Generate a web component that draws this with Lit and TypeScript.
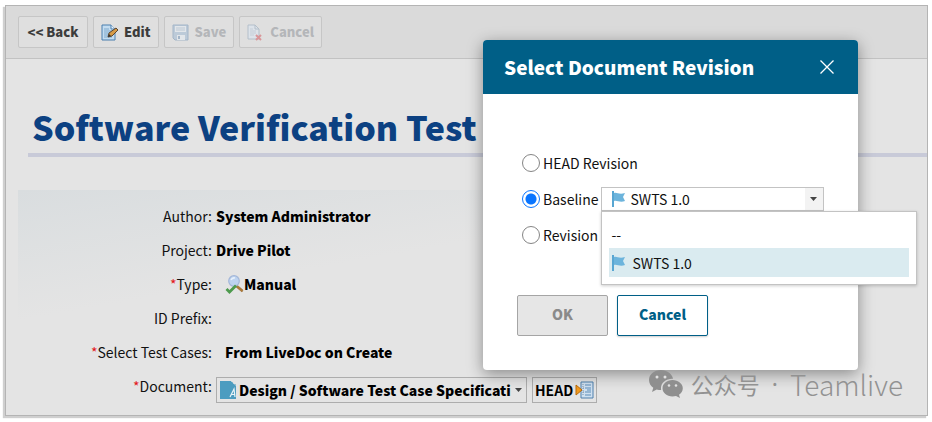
import { LitElement, html, css, svg } from "lit";
import { customElement, state } from "lit/decorators.js";

const pageBlue = svg`<path d="M1 1h9l4 4v11H1z" fill="#c3dcf0" stroke="#4a7fae"/><path d="M10 1v4h4" fill="#eef6fc" stroke="#4a7fae"/><path d="M3 5h5M3 7h8M3 9h8M3 11h8M3 13h8" stroke="#7fa9cc" fill="none"/>`;

const icons = {
  edit: html`<svg width="17" height="17" viewBox="0 0 17 17" aria-hidden="true">${pageBlue}<path d="M7 13l1-4 7-5 2 2-6 6z" fill="#d79a45" stroke="#5a4632" stroke-width="1"/><path d="M7 13l1-3 2 2z" fill="#333"/></svg>`,
  save: html`<svg width="17" height="17" viewBox="0 0 17 17" aria-hidden="true"><path d="M1 1h15v15H3l-2-2z" fill="#bccad8" stroke="#a3b5c8"/><path d="M3 2h11v6H3z" fill="#e2e6ea"/><path d="M4 4h9M4 6h9" stroke="#bcc8d4"/><path d="M5 11h8v5H5z" fill="#e2e6ea"/><path d="M6 12h2v3H6z" fill="#a3b5c8"/></svg>`,
  discard: html`<svg width="17" height="17" viewBox="0 0 17 17" aria-hidden="true"><path d="M1 1h7l4 4v10H1z" fill="#dde3ea" stroke="#b4bfca"/><path d="M8 1v4h4" fill="none" stroke="#b4bfca"/><path d="M3 5h3M3 7h6M3 9h6M3 11h4" stroke="#c5ced8"/><path d="M9 11l5 5M14 11l-5 5" stroke="#d9969a" stroke-width="2"/></svg>`,
  manual: html`<svg width="19" height="19" viewBox="0 0 19 19" aria-hidden="true"><path d="M12 10l6 5-1 2-6-5z" fill="#b07a35" stroke="#8a5c22" stroke-width=".5"/><circle cx="9" cy="6" r="5.3" fill="#bdd3f0" stroke="#a3b7d8" stroke-width="1.2"/><path d="M6 5a3.500 3.500 0 0 1 4-2" stroke="#e8f1fb" stroke-width="1.500" fill="none"/><path d="M1.500 14l3 3L11 10.500" stroke="#4d9a4d" stroke-width="2.800" fill="none"/></svg>`,
  doc: html`<svg width="17" height="18" viewBox="0 0 17 18" aria-hidden="true"><path d="M0 0h11l5 5v13H0z" fill="#4c9cc0"/><path d="M11 0h5v5z" fill="#e3e3e3"/><path d="M12 1v3h4" fill="none" stroke="#4c9cc0"/><path d="M10 16l4-8 1 8M11 13.500h4" stroke="#e8f3f8" stroke-width="1.200" fill="none"/></svg>`,
  head: html`<svg width="19" height="18" viewBox="0 0 19 18" aria-hidden="true"><path d="M6 1h12v16H6z" fill="#cfe0f0" stroke="#4f80ad"/><path d="M10 4h6M10 7h6M12 9h4M10 11h6M10 14h6" stroke="#5d8db8"/><path d="M8 3v12M8 7h2M8 11h2" stroke="#7d93a8" stroke-dasharray="1 1"/><path d="M1 4l6 5-6 5z" fill="#f29a1f" stroke="#b86a08"/></svg>`,
  flag: html`<svg width="13" height="16" viewBox="0 0 13 16" aria-hidden="true"><path d="M0 0h2v16H0z" fill="#58a6d2"/><path d="M2 2c3-1 5 2 11 0l-2 4 2 4c-5 2-8-1-11 0z" fill="#6cb4dc"/></svg>`,
  caret: html`<svg width="7" height="4" viewBox="0 0 7 4" aria-hidden="true"><path d="M0 0h7L3.500 4z" fill="#444"/></svg>`,
  close: html`<svg width="14" height="14" viewBox="0 0 14 14" aria-hidden="true"><path d="M.5.5l13 13M13.500.5l-13 13" stroke="#fff" stroke-width="1.300"/></svg>`,
  wechat: html`<svg width="34" height="28" viewBox="0 0 34 28" aria-hidden="true"><path d="M12 0C5 0 0 4.500 0 10c0 3.200 1.700 6 4.300 7.800L3 22l4.700-2.500c1.400.4 2.900.6 4.500.6A9 9 0 0 1 12 18c0-5.300 5-9.300 11-9.300h1C23 3.500 18 0 12 0z" fill="#8f8f8f"/><path d="M23.500 10C17.800 10 13.500 13.700 13.500 18.200s4.300 8.200 10 8.200c1.200 0 2.400-.2 3.500-.5l4 2-1-3.200c2.300-1.500 3.800-3.900 3.800-6.500C33.800 13.700 29.200 10 23.500 10z" fill="#8f8f8f"/><circle cx="8" cy="7" r="1.500" fill="#e2e2e2"/><circle cx="16" cy="7" r="1.500" fill="#e2e2e2"/><circle cx="20" cy="15.500" r="1.300" fill="#e2e2e2"/><circle cx="27" cy="15.500" r="1.300" fill="#e2e2e2"/></svg>`,
};

@customElement("app-root")
export class AppRoot extends LitElement {
  @state() private revision = "baseline";

  static styles = css`
    :host {
      display: block;
      position: relative;
      padding: 5px 4px 5px 5px;
      background: #fff;
      color: #111;
      font: 14px/20px "Noto Sans CJK SC", "Noto Sans", sans-serif;
    }
    * { box-sizing: border-box; }
    svg { display: block; flex: none; }
    button, input { font: inherit; margin: 0; }
    button { cursor: pointer; }
    button:disabled { cursor: default; }
    .frame {
      border: 1px solid #b4b4b4;
      background: #e4e4e4;
      box-shadow: -2px 2px 1px #cfcfcf;
    }
    .toolbar {
      display: flex;
      gap: 5px;
      padding: 10px 12px;
      background: #dadada;
      border-bottom: 1px solid #c2c2c2;
    }
    .tool {
      display: flex;
      align-items: center;
      justify-content: center;
      gap: 6px;
      height: 32px;
      padding: 0 7px;
      border: 1px solid #c6c6c6;
      border-radius: 2px;
      background: #dfdfdf;
      color: #3c3c3c;
      font-size: 13px;
      font-weight: 900;
    }
    .back { min-width: 70px; }
    .tool:disabled { color: #b4b6b9; }
    h1 {
      margin: 42px 0 0 22px;
      padding: 0 4px;
      border-bottom: 4px solid #c8cad8;
      color: #0c4182;
      font-size: 34px;
      line-height: 52px;
      font-weight: 900;
      white-space: nowrap;
    }
    .form {
      display: grid;
      grid-template-columns: 194px 1fr;
      column-gap: 4px;
      margin: 33px 0 0 12px;
      padding: 9px 0 4px;
      background: linear-gradient(170deg, #d9dddf 0, #e4e4e4 34%);
    }
    .label, .value { display: flex; align-items: center; height: 34px; }
    .label { justify-content: flex-end; }
    .req { color: #e3161b; }
    .value { color: #000; font-weight: 900; }
    .inset { padding-left: 9px; }
    .picks { gap: 5px; height: 42px; }
    .pick {
      display: flex;
      align-items: center;
      gap: 2px;
      height: 26px;
      padding: 0 2px;
      border: 1px solid #adadad;
      background: #e4e4e4;
      color: #000;
      font-weight: 700;
      white-space: nowrap;
    }
    .doc { width: 311px; padding: 0 4px 0 3px; font-weight: 900; }
    .clip { flex: 1; overflow: hidden; text-align: left; }
    .dialog {
      position: absolute;
      top: 40px;
      right: 74px;
      width: 375px;
      border-radius: 4px;
      background: #fff;
      color: #111;
      box-shadow: 0 4px 16px rgba(0, 0, 0, .4);
    }
    .head {
      display: flex;
      align-items: center;
      justify-content: space-between;
      height: 54px;
      padding: 0 24px 0 21px;
      border-radius: 4px 4px 0 0;
      background: #005f87;
      color: #fff;
    }
    h2 { margin: 0; font-size: 19px; line-height: 24px; font-weight: 900; }
    .close { padding: 0; border: 0; background: none; }
    .body { padding: 51px 34px 34px; }
    .row { display: flex; align-items: center; height: 36px; padding-left: 5px; }
    .row label { display: flex; align-items: center; gap: 3px; }
    .row input {
      appearance: none;
      width: 18px;
      height: 18px;
      border: 1px solid #858585;
      border-radius: 50%;
      background: #fff;
    }
    .row input:checked { border-color: #0a75ff; background: radial-gradient(circle, #0a75ff 5px, #fff 6px); }
    .combo { position: relative; margin-left: 2px; }
    .current {
      display: flex;
      align-items: center;
      gap: 6px;
      width: 223px;
      height: 24px;
      padding: 0 0 0 10px;
      border: 1px solid #c3c3c3;
      background: #fff;
      color: #111;
      text-align: left;
    }
    .arrow {
      display: flex;
      align-items: center;
      justify-content: center;
      width: 18px;
      height: 22px;
      margin-left: auto;
      background: #f3f3f3;
    }
    .menu {
      position: absolute;
      top: 24px;
      left: 0;
      z-index: 1;
      width: 316px;
      margin: 0;
      padding: 7px;
      border: 1px solid #c3c3c3;
      background: #fff;
      list-style: none;
      box-shadow: 0 1px 3px rgba(0, 0, 0, .2);
    }
    .menu li { display: flex; align-items: center; gap: 8px; height: 29px; padding: 0 3px; }
    .menu .on { background: #daebf0; }
    .actions { display: flex; gap: 9px; margin-top: 42px; }
    .action {
      width: 91px;
      height: 41px;
      padding: 0 0 3px;
      border: 1px solid #005f87;
      border-radius: 2px;
      background: #fff;
      color: #005f87;
      font-weight: 900;
      box-shadow: 0 1px 2px rgba(0, 0, 0, .2);
    }
    .action:disabled { border-color: #a5a5a5; background: #e6e6e6; color: #8a8a8a; box-shadow: none; }
    .mark {
      position: absolute;
      right: 29px;
      bottom: 21px;
      display: flex;
      align-items: center;
      gap: 8px;
      color: #929292;
      font-size: 23px;
      line-height: 32px;
    }
    .dot { padding: 0 4px; font-family: "Noto Sans", sans-serif; }
    .name { font-size: 28px; font-weight: 300; }
  `;

  private radio(value: string, text: string) {
    return html`<label><input type="radio" name="rev" .checked=${this.revision === value} @change=${() => (this.revision = value)} />${text}</label>`;
  }

  private label(text: string, required = false) {
    return html`<div class="label">${required ? html`<span class="req">*</span>` : ""}${text}:</div>`;
  }

  render() {
    return html`
      <main class="frame">
        <div class="toolbar">
          <button class="tool back">&lt;&lt; Back</button>
          <button class="tool">${icons.edit}Edit</button>
          <button class="tool" disabled>${icons.save}Save</button>
          <button class="tool" disabled>${icons.discard}Cancel</button>
        </div>
        <h1>Software Verification Test</h1>
        <div class="form">
          ${this.label("Author")}<div class="value">System Administrator</div>
          ${this.label("Project")}<div class="value">Drive Pilot</div>
          ${this.label("Type", true)}<div class="value inset">${icons.manual}Manual</div>
          ${this.label("ID Prefix")}<div class="value"></div>
          ${this.label("Select Test Cases", true)}<div class="value inset">From LiveDoc on Create</div>
          ${this.label("Document", true)}
          <div class="value picks">
            <button class="pick doc">${icons.doc}<span class="clip">Design / Software Test Case Specificati</span>${icons.caret}</button>
            <button class="pick">HEAD${icons.head}</button>
          </div>
        </div>
      </main>
      <section class="dialog" role="dialog" aria-labelledby="title">
        <header class="head">
          <h2 id="title">Select Document Revision</h2>
          <button class="close" aria-label="Close">${icons.close}</button>
        </header>
        <div class="body">
          <div class="row">${this.radio("head", "HEAD Revision")}</div>
          <div class="row">
            ${this.radio("baseline", "Baseline")}
            <div class="combo">
              <button class="current" aria-haspopup="listbox" aria-expanded="true">${icons.flag}SWTS 1.0<span class="arrow">${icons.caret}</span></button>
              <ul class="menu" role="listbox" aria-label="Baseline">
                <li role="option">--</li>
                <li class="on" role="option" aria-selected="true">${icons.flag}SWTS 1.0</li>
              </ul>
            </div>
          </div>
          <div class="row">${this.radio("revision", "Revision")}</div>
          <div class="actions">
            <button class="action" disabled>OK</button>
            <button class="action">Cancel</button>
          </div>
        </div>
      </section>
      <div class="mark">${icons.wechat}<span>公众号</span><span class="dot">·</span><span class="name">Teamlive</span></div>
    `;
  }
}
